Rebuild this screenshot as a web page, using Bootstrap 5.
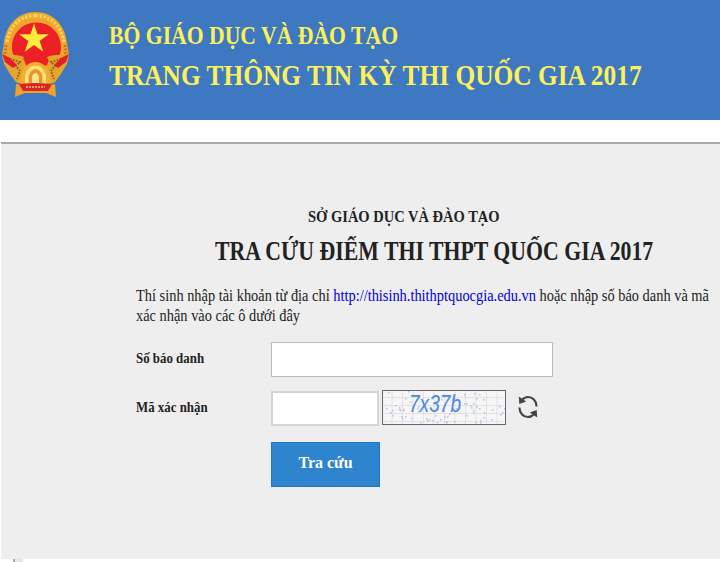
<!DOCTYPE html>
<html lang="vi">

<head>
    <meta charset="UTF-8">
    <title>Tra cứu điểm thi THPT Quốc gia 2017</title>
    <link href="https://cdn.jsdelivr.net/npm/bootstrap@5.3.3/dist/css/bootstrap.min.css" rel="stylesheet">
    <style>
        body {
            font-family: "Liberation Serif", "Noto Sans CJK SC", serif;
            color: #222;
            background: #fff;
            overflow: hidden;
        }

        /* the reference text is stretched upward */
        .stretched {
            display: inline-block;
            white-space: nowrap;
            transform-origin: left center;
        }

        .top-banner {
            height: 120px;
            background: #3d78c0;
            padding: 12px 0 0 1px;
        }

        .banner-titles {
            margin-left: 39px;
            padding-top: 9px;
            color: #fdf05a;
            font-weight: 700;
        }

        .banner-line1 {
            font-size: 21.7px;
            line-height: 30px;
        }

        .banner-line1 .stretched {
            transform: scaleY(1.2);
        }

        .banner-line2 {
            font-size: 25.4px;
            line-height: 36px;
            margin-top: 5px;
        }

        .banner-line2 .stretched {
            transform: scaleY(1.18);
        }

        .gray-panel {
            margin: 22px 0 0 1px;
            height: 417px;
            background: #eee;
            border-top: 2px solid #a9a9a9;
            padding: 63px 0 0 135px;
        }

        .sub-title {
            font-size: 14.5px;
            font-weight: 700;
            line-height: 18px;
            padding-left: 172px;
        }

        .sub-title .stretched {
            transform: scaleY(1.14);
        }

        .main-title {
            font-size: 21.8px;
            font-weight: 700;
            line-height: 30px;
            margin: 11px 0 0 79px;
        }

        .main-title .stretched {
            transform: scaleY(1.24);
        }

        .intro-text {
            font-size: 14.4px;
            line-height: 17.6px;
            margin: 21px 0 20px;
        }

        .intro-text .stretched {
            transform-origin: left top;
            transform: scaleY(1.11);
        }

        .intro-text a {
            color: #0000e0;
            text-decoration: none;
        }

        .form-label-col {
            width: 135px;
            font-size: 12.9px;
            font-weight: 700;
        }

        .form-label-col .stretched {
            transform: scaleY(1.12);
        }

        .text-box {
            height: 35px;
            border: 1px solid #bbb;
            border-radius: 0;
            padding: 0 8px;
            background: #fff;
        }

        .text-box-long {
            width: 282px;
        }

        .text-box-short {
            width: 108px;
            border: 2px solid #d4d4d4;
        }

        .captcha-pic {
            width: 124px;
            height: 35px;
            margin: -2px 0 0 3px;
            display: block;
        }

        .refresh-pic {
            margin: -4px 0 0 11px;
        }

        .form-row-gap {
            margin-top: 14px;
        }

        .search-btn {
            width: 109px;
            height: 45px;
            margin: 16px 0 0 135px;
            background: #2e84cd;
            border: 1px solid #1f78c4;
            border-radius: 0;
            color: #fff;
            font-size: 16px;
            font-weight: 700;
            padding: 0 0 4px;
        }

        .search-btn:hover {
            background: #2775b8;
            color: #fff;
        }

        .foot-tick {
            width: 10px;
            height: 3px;
            margin-left: 13px;
            background: #e6e6e6;
            border-left: 2px solid #aaa;
        }
    </style>
</head>

<body>
    <header class="top-banner d-flex align-items-start">
        <svg class="flex-shrink-0" width="69" height="86" viewBox="0 0 69 86" aria-label="Quốc huy">
            <!-- outer rice wreath -->
            <path d="M34.5 0C17 0 5 13 3 31L1 43l2 9 6 9 6 9 8 3h23l8-3 6-9 6-9 2-9-2-12C64 13 52 0 34.5 0Z" fill="#f0a62a" />
            <path d="M34.5 3.5C19 3.5 7.5 15 6 31.5M34.5 3.5C50 3.5 61.500 15 63 31.5" fill="none" stroke="#fbd35c" stroke-width="3.400" stroke-dasharray="2.500 1.500" />
            <path d="M5 33 4 44M64 33 65 44" fill="none" stroke="#c8791e" stroke-width="3" stroke-dasharray="2 1.500" />
            <!-- red field -->
            <path d="M35.500 10.500C21 10.500 11 22 11 35c0 5 1 7.500 3 9.500l9 3 2 6h21l2-6 9-3c2-2 3-4.500 3-9.500 0-13-10-24.500-24.500-24.500Z" fill="#ee2027" />
            <path d="M33 11.500l3.500 10.800h11.400l-9.200 6.700 3.500 10.800-9.200-6.700-9.200 6.700 3.500-10.800-9.200-6.700h11.400Z" fill="#fdec3c" />
            <!-- side sheaves -->
            <path d="M2 44c6-1 14-2 21 1l-3 6 3 6-3 10-4 4-7-9-5-9Z" fill="#e3a52b" />
            <path d="M67 44c-6-1-14-2-21 1l3 6-3 6 3 10 4 4 7-9 5-9Z" fill="#e3a52b" />
            <path d="M9 47l10 3-4 4 4 5-3 8M60 47l-10 3 4 4-4 5 3 8" fill="none" stroke="#8d5a1c" stroke-width="2" stroke-dasharray="1.500 1.500" />
            <path d="M1 42 9 46 16 53 12 56 4 50Z M68 42 60 46 53 53 57 56 65 50Z" fill="#e3202a" />
            <!-- cog arch -->
            <path d="M20 71V66a14.500 16 0 0 1 29 0V71Z" fill="#f3ae2e" />
            <path d="M24 71V66a10.500 12.500 0 0 1 21 0V71Z" fill="#fbe27c" />
            <path d="M27.500 71V66a7 9 0 0 1 14 0V71Z" fill="#e9932a" />
            <path d="M31 71V66a3.500 5 0 0 1 7 0V71Z" fill="#fde68a" />
            <!-- ribbon -->
            <path d="M15 72 34.500 76 54 72 55 85 45 81H24L14 85Z" fill="#f0a02c" />
            <path d="M18 72 34.500 71 51 72 47 79H22Z" fill="#d8232a" />
            <path d="M25 75h19" stroke="#f6c65a" stroke-width="1.500" stroke-dasharray="2 1" />
        </svg>
        <div class="banner-titles">
            <div class="banner-line1"><span class="stretched">BỘ GIÁO DỤC VÀ ĐÀO TẠO</span></div>
            <div class="banner-line2"><span class="stretched">TRANG THÔNG TIN KỲ THI QUỐC GIA 2017</span></div>
        </div>
    </header>

    <main class="gray-panel">
        <div class="sub-title"><span class="stretched">SỞ GIÁO DỤC VÀ ĐÀO TẠO</span></div>
        <h1 class="main-title"><span class="stretched">TRA CỨU ĐIỂM THI THPT QUỐC GIA 2017</span></h1>
        <p class="intro-text"><span class="stretched">Thí sinh nhập tài khoản từ địa chỉ <a href="#">http://thisinh.thithptquocgia.edu.vn</a> hoặc nhập số báo danh và mã<br>xác nhận vào các ô dưới đây</span></p>

        <form onsubmit="return false">
            <div class="d-flex align-items-center">
                <label class="form-label-col" for="sbd"><span class="stretched">Số báo danh</span></label>
                <input class="text-box text-box-long" id="sbd" type="text">
            </div>
            <div class="d-flex align-items-center form-row-gap">
                <label class="form-label-col" for="mxn"><span class="stretched">Mã xác nhận</span></label>
                <input class="text-box text-box-short" id="mxn" type="text">
                <svg class="captcha-pic" viewBox="0 0 124 35">
                    <defs>
                        <pattern id="captchaGrid" width="10.500" height="8" patternUnits="userSpaceOnUse">
                            <path d="M10.500 0V8M0 8H10.500" fill="none" stroke="#d2d2d2" stroke-width="1" />
                        </pattern>
                    </defs>
                    <rect width="124" height="35" fill="#f7f5f6" />
                    <rect width="124" height="35" fill="url(#captchaGrid)" />
                    <g id="captchaDots" fill="#a9c3ef"></g>
                    <text transform="translate(27 22) scale(.83 1)" font-family="Liberation Sans, sans-serif" font-style="italic" font-size="23" fill="#4f86e6">7x37b</text>
                    <rect x="0.5" y="0.5" width="123" height="34" fill="none" stroke="#666" />
                </svg>
                <svg class="refresh-pic" width="22" height="26" viewBox="0 0 22 26">
                    <path d="M19.600 12.500C19.400 6.800 15.500 3 11 3 8.600 3 6.400 4.200 4.900 6.200M2.400 13.500C2.600 19.200 6.500 23 11 23 13.400 23 15.600 21.800 17.100 19.800" fill="none" stroke="#444" stroke-width="2.200" />
                    <path d="M1.800 2.500 9.200 7.500 2.300 10ZM20.200 23.500 12.800 18.500 19.700 16Z" fill="#444" />
                </svg>
            </div>
            <button class="search-btn btn d-block" type="submit">Tra cứu</button>
        </form>
    </main>
    <div class="foot-tick"></div>

    <script src="https://cdn.jsdelivr.net/npm/bootstrap@5.3.3/dist/js/bootstrap.bundle.min.js"></script>
    <script>
        // noise on the captcha, fixed seed so it looks the same each load
        let seed = 37;
        function next(max) {
            seed = (seed * 16807) % 2147483647;
            return seed % max;
        }
        const dots = document.getElementById('captchaDots');
        let dotMarkup = '';
        for (let i = 0; i < 70; i++) {
            dotMarkup += `<rect x="${next(122) + 1}" y="${next(33) + 1}" width="1.500" height="1.500" />`;
        }
        dots.innerHTML = dotMarkup;
    </script>
</body>

</html>
